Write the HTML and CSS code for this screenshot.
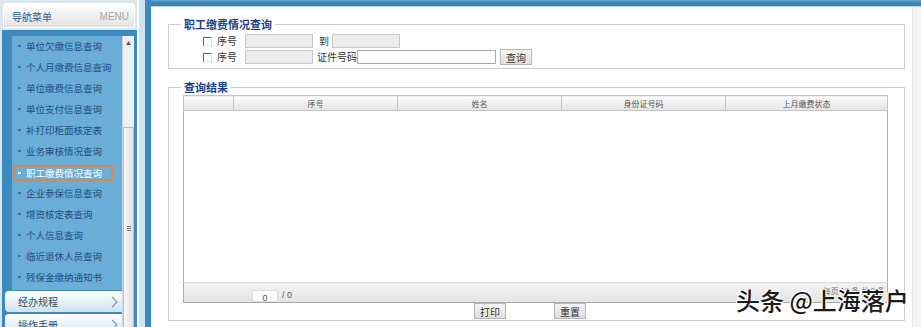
FILE: index.html
```html
<!DOCTYPE html>
<html lang="zh-CN">
<head>
    <meta charset="UTF-8">
    <title>职工缴费情况查询</title>
    <link rel="stylesheet" href="styles.css">
</head>
<body>
<div class="page">
    <aside class="sidebar">
        <div class="side-head">
            <span class="side-title">导航菜单</span>
            <span class="side-en">MENU</span>
        </div>
        <div class="side-main">
            <div class="side-col">
                <div class="nav-box">
                    <ul class="nav">
                        <li>单位欠缴信息查询</li>
                        <li>个人月缴费信息查询</li>
                        <li>单位缴费信息查询</li>
                        <li>单位支付信息查询</li>
                        <li>补打印柜面核定表</li>
                        <li>业务审核情况查询</li>
                        <li class="active">职工缴费情况查询</li>
                        <li>企业参保信息查询</li>
                        <li>增资核定表查询</li>
                        <li>个人信息查询</li>
                        <li>临近退休人员查询</li>
                        <li>残保金缴纳通知书</li>
                    </ul>
                </div>
                <div class="side-btn">经办规程
                    <svg width="7" height="12" viewBox="0 0 7 12"><path d="M1 1 L6 6 L1 11" fill="none" stroke="#7f9fb8" stroke-width="1.3"/></svg>
                </div>
                <div class="side-btn">操作手册
                    <svg width="7" height="12" viewBox="0 0 7 12"><path d="M1 1 L6 6 L1 11" fill="none" stroke="#7f9fb8" stroke-width="1.3"/></svg>
                </div>
            </div>
            <div class="scrollbar">
                <div class="scroll-up">▲</div>
                <div class="scroll-thumb"><span class="grip"></span></div>
            </div>
        </div>
    </aside>

    <div class="gutter"></div>

    <main class="main">
        <div class="top-strip"></div>
        <div class="main-body">
            <div class="content">
                <fieldset class="box query">
                    <legend>职工缴费情况查询</legend>
                    <div class="row">
                        <span class="check"></span><span class="lbl">序号</span>
                        <span class="field"></span>
                        <span class="to">到</span>
                        <span class="field"></span>
                    </div>
                    <div class="row">
                        <span class="check"></span><span class="lbl">序号</span>
                        <span class="field"></span>
                        <span class="id-lbl">证件号码</span>
                        <span class="field wide"></span>
                        <button class="btn">查询</button>
                    </div>
                </fieldset>

                <fieldset class="box result">
                    <legend>查询结果</legend>
                    <table class="grid">
                        <thead>
                        <tr>
                            <th class="c0"></th>
                            <th class="c1">序号</th>
                            <th class="c1">姓名</th>
                            <th class="c1">身份证号码</th>
                            <th>上月缴费状态</th>
                        </tr>
                        </thead>
                        <tbody>
                        <tr class="empty"><td colspan="5"></td></tr>
                        </tbody>
                        <tfoot>
                        <tr>
                            <td colspan="5">
                                <div class="pager">
                                    <span class="page-no">0</span>
                                    <span class="page-total">/ 0</span>
                                    <span class="page-info">每页 15 条 共 0 条</span>
                                </div>
                            </td>
                        </tr>
                        </tfoot>
                    </table>
                    <div class="actions">
                        <button class="btn">打印</button>
                        <button class="btn reset">重置</button>
                    </div>
                </fieldset>
            </div>
            <div class="right-edge"></div>
        </div>
    </main>

    <div class="watermark">头条 @上海落户</div>
</div>
</body>
</html>
```

FILE: styles.css
```css
* {
    box-sizing: border-box;
}

body {
    margin: 0;
    font-family: "Noto Sans CJK SC", "Liberation Sans", sans-serif;
    background: #ffffff;
}

.page {
    position: relative;
    display: flex;
    width: 921px;
    height: 327px;
    overflow: hidden;
}

/* sidebar */
.sidebar {
    width: 137px;
    display: flex;
    flex-direction: column;
    background: #d6e6f1;
}

.side-head {
    display: flex;
    height: 30px;
    padding: 3px 2px 2px 3px;
    background: #dbe7ef;
}

.side-title,
.side-en {
    line-height: 25px;
    font-size: 10px;
    background: linear-gradient(#fdfdfd, #e3e3e3);
    border: 1px solid #ffffff;
}

.side-title {
    flex: 1;
    padding-left: 8px;
    color: #2d5d88;
    border-right: none;
    border-radius: 4px 0 0 0;
}

.side-en {
    padding-right: 5px;
    font-family: "Liberation Sans", sans-serif;
    color: #a6a6a6;
    border-left: none;
    border-radius: 0 4px 0 0;
}

.side-main {
    flex: 1;
    display: flex;
    margin-left: 2px;
    padding-right: 3px;
    background: #3b8bc1;
}

.side-col {
    width: 120px;
    display: flex;
    flex-direction: column;
}

.nav-box {
    height: 260px;
    padding: 6px 0 0 10px;
}

.nav {
    list-style: none;
    margin: 0;
    padding: 0;
    height: 100%;
    background: #6aadd6;
}

.nav li {
    height: 21px;
    padding-left: 6px;
    font-size: 9.5px;
    line-height: 21px;
    color: #1f4f83;
    white-space: nowrap;
}

.nav li::before {
    content: "";
    display: inline-block;
    width: 3px;
    height: 2px;
    margin: 0 5px 2px 0;
    vertical-align: middle;
    background: #3c74a6;
}

.nav li.active {
    height: 16px;
    margin: 3px 9px 2px 1px;
    padding-left: 3px;
    line-height: 12px;
    color: #ffffff;
    border: 2px solid #d8894a;
}

.nav li.active::before {
    background: #ffffff;
}

.side-btn {
    display: flex;
    align-items: center;
    justify-content: space-between;
    height: 21px;
    margin: 1px 0 1px 3px;
    padding: 0 4px 0 13px;
    font-size: 10px;
    color: #33506c;
    background: linear-gradient(#ffffff, #cfe2ef);
    border-radius: 4px 0 0 4px;
}

.scrollbar {
    width: 12px;
    margin-top: 6px;
    display: flex;
    flex-direction: column;
    background: #eef1f3;
    border-left: 1px solid #c8d6e1;
}

.scroll-up {
    height: 14px;
    font-size: 5px;
    line-height: 14px;
    text-align: center;
    color: #555555;
}

.scroll-thumb {
    position: relative;
    margin-top: 77px;
    flex: 1;
    background: linear-gradient(90deg, #f7f7f7, #e2e2e2);
    border: 1px solid #c0c0c0;
    border-bottom: none;
}

.grip {
    position: absolute;
    left: 3px;
    top: 98px;
    width: 4px;
    height: 5px;
    border-top: 1px solid #777;
    border-bottom: 1px solid #777;
}

.grip::after {
    content: "";
    position: absolute;
    left: 0;
    top: 1px;
    width: 4px;
    border-top: 1px solid #777;
}

.gutter {
    width: 14px;
    background: #cfe3f0;
    border-left: 2px solid #ffffff;
    border-right: 6px solid #3a8ac0;
}

/* main */
.main {
    flex: 1;
    display: flex;
    flex-direction: column;
}

.top-strip {
    height: 7px;
    background: linear-gradient(#69a8cf, #3d86b8 45%, #3a7fae);
    border-bottom: 1px solid #b9d4e6;
}

.main-body {
    flex: 1;
    display: flex;
}

.content {
    flex: 1;
    padding: 0 7px 0 17px;
}

.right-edge {
    width: 9px;
    background: #f3f3f3;
    border-left: 1px solid #e2e2e2;
}

.box {
    margin: 0;
    padding: 0;
    border: 1px solid #cbcbcb;
}

.box legend {
    margin-left: 12px;
    padding: 0 3px;
    font-size: 11px;
    font-weight: bold;
    line-height: 13px;
    color: #1c3f8c;
}

.query {
    margin-top: 11px;
    padding-bottom: 3px;
}

.row {
    display: flex;
    align-items: center;
    height: 16px;
    margin-left: 34px;
    font-size: 10px;
    color: #333333;
}

.row:first-of-type {
    margin-top: 2px;
}

.check {
    width: 9px;
    height: 9px;
    margin-right: 5px;
    border-top: 1px solid #666666;
    border-left: 1px solid #666666;
    border-right: 1px solid #e2e2e2;
    border-bottom: 1px solid #e2e2e2;
}

.lbl {
    width: 28px;
    line-height: 14px;
}

.field {
    width: 68px;
    height: 14px;
    background: #ececec;
    border: 1px solid #c7c7c7;
}

.field.wide {
    width: 139px;
    background: #ffffff;
    border-color: #a9a9a9;
}

.to {
    margin: 0 3px 0 6px;
    width: 10px;
    line-height: 14px;
}

.id-lbl {
    margin-left: 4px;
    line-height: 14px;
}

.btn {
    height: 16px;
    padding: 0 5px;
    font-family: "Noto Sans CJK SC", "Liberation Sans", sans-serif;
    font-size: 10px;
    line-height: 13px;
    color: #333333;
    background: linear-gradient(#f6f6f6, #dedede);
    border: 1px solid #b7b7b7;
    border-radius: 0;
}

.row .btn {
    margin-left: 4px;
}

.result {
    margin-top: 12px;
}

.grid {
    width: 705px;
    margin: 1px 0 0 14px;
    border-collapse: collapse;
    border: 1px solid #a9a9a9;
}

.grid th {
    height: 15px;
    padding: 0;
    font-size: 8px;
    font-weight: normal;
    line-height: 13px;
    color: #555555;
    background: linear-gradient(#fafafa, #e4e4e4);
    border: 1px solid #c4c4c4;
}

.grid th.c0 {
    width: 50px;
}

.grid th.c1 {
    width: 164px;
}

.grid .empty td {
    height: 172px;
    padding: 0;
}

.grid tfoot td {
    height: 20px;
    padding: 0;
    background: linear-gradient(#f3f3f3, #e3e3e3);
    border-top: 1px solid #dcdcdc;
}

.pager {
    display: flex;
    align-items: flex-end;
    height: 19px;
    font-size: 9px;
    color: #555555;
}

.page-no {
    width: 26px;
    height: 12px;
    margin-left: 68px;
    font-family: "Liberation Sans", sans-serif;
    font-size: 9px;
    line-height: 14px;
    text-align: center;
    background: #ffffff;
    border: 1px solid #dddddd;
}

.page-total {
    margin-left: 4px;
    font-family: "Liberation Sans", sans-serif;
    line-height: 14px;
}

.page-info {
    align-self: flex-start;
    margin-left: auto;
    padding: 3px 2px 0 0;
    font-size: 8px;
    line-height: 10px;
    color: #777777;
}

.actions {
    display: flex;
    height: 17px;
    margin-left: 305px;
}

.actions .reset {
    margin-left: 48px;
}

.watermark {
    position: absolute;
    left: 736px;
    top: 284px;
    font-size: 24px;
    font-weight: 500;
    line-height: 32px;
    color: #1a1a1a;
    text-shadow: 1px 1px 0 #ffffff, -1px -1px 0 #ffffff, 1px -1px 0 #ffffff, -1px 1px 0 #ffffff;
}
```
